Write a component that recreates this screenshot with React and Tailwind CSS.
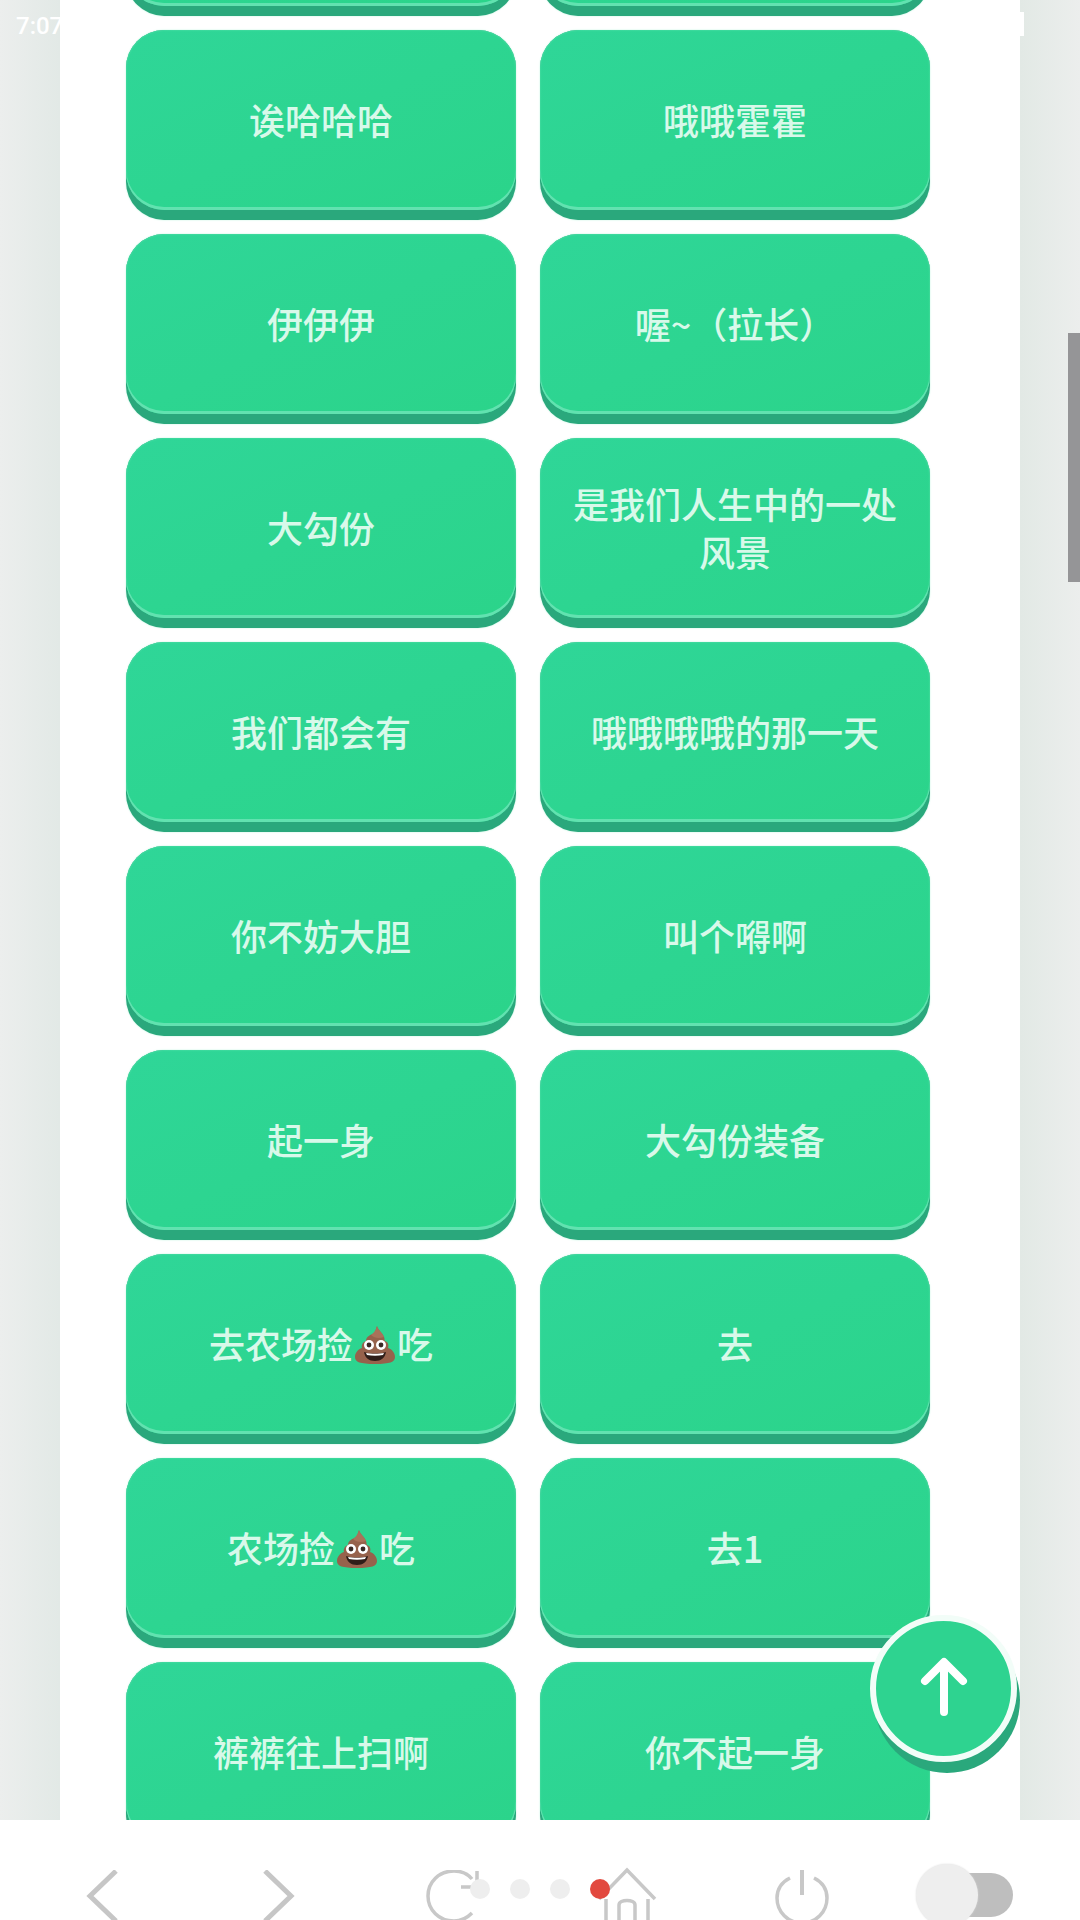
const rows = [
  ["", ""],
  ["诶哈哈哈", "哦哦霍霍"],
  ["伊伊伊", "喔~（拉长）"],
  ["大勾份", "是我们人生中的一处风景"],
  ["我们都会有", "哦哦哦哦的那一天"],
  ["你不妨大胆", "叫个嘚啊"],
  ["起一身", "大勾份装备"],
  [["去农场捡", "吃"], "去"],
  [["农场捡", "吃"], "去1"],
  ["裤裤往上扫啊", "你不起一身"],
];

function Poop() {
  return (
    <svg viewBox="0 0 44 40" className="w-[44px] h-[40px] mb-[-4px] shrink-0">
      <path d="M24 1c1 4 5 6 7 11 1 2 0 3 1 4 3 1 4 4 3 7 4 1 7 5 7 9 0 5-5 7-20 7S2 37 2 32c0-4 3-8 7-9-1-3 1-6 4-7 0-5 5-6 8-8 2-2 2-5 3-7z" fill="#96624c" />
      <path d="M24 1c1 4 5 6 7 11-5 2-10 1-13-2 3-2 5-5 6-9z" fill="#a9725a" />
      <circle cx="16" cy="20" r="5" fill="#fff" />
      <circle cx="28" cy="20" r="5" fill="#fff" />
      <circle cx="16" cy="20" r="2.4" fill="#3a2a25" />
      <circle cx="28" cy="20" r="2.4" fill="#3a2a25" />
      <path d="M11 27c6 2 16 2 22 0-1 6-5 9-11 9s-10-3-11-9z" fill="#2e1d18" />
      <path d="M13 28c5 1 13 1 18 0l-1 2c-5 1-11 1-16 0z" fill="#fff" />
    </svg>
  );
}

function Label({ text }) {
  if (Array.isArray(text)) {
    return (
      <span className="flex items-center justify-center">
        <span>{text[0]}</span>
        <Poop />
        <span>{text[1]}</span>
      </span>
    );
  }
  return <span>{text}</span>;
}

function Btn({ text }) {
  return (
    <div className="h-[190px] w-[390px] rounded-[38px] bg-[#2aa87c] shadow-[0_0_2px_#b9f3dc]">
      <div className="h-[180px] pb-[2px] rounded-[38px] bg-gradient-to-br from-[#2fd698] to-[#2bd48a] shadow-[inset_0_-3px_0_#62e2b0,inset_0_0_2px_#62e2b0] flex items-center justify-center px-4 text-center text-[36px] leading-[48px] font-medium text-[#d8f9ea] font-['Noto_Sans_CJK_SC','Noto_Sans',sans-serif]">
        <Label text={text} />
      </div>
    </div>
  );
}

export default function App() {
  return (
    <div className="relative w-[1080px] h-[1920px] overflow-hidden bg-white font-['Noto_Sans_CJK_SC',sans-serif]">
      <div className="flex h-[1820px] overflow-hidden">
        <div className="w-[60px] bg-gradient-to-r from-[#eceeed] to-[#e2e9e6]" />
        <div className="w-[960px] bg-white pl-[66px] pt-0">
          <div className="mt-[-174px] grid grid-cols-[390px_390px] gap-x-[24px] gap-y-[14px]">
            {rows.map((r, i) => (
              <div key={i} className="contents">
                <Btn text={r[0]} />
                <Btn text={r[1]} />
              </div>
            ))}
          </div>
        </div>
        <div className="flex-1 bg-gradient-to-r from-[#e2e9e5] to-[#eceeed] flex justify-end pt-[333px]">
          <div className="w-[12px] h-[249px] bg-[#959597]" />
        </div>
      </div>

      <div className="h-[100px] bg-white grid grid-cols-[176px_176px_176px_176px_176px_176px] pl-[14px] pt-[50px]">
        <div className="flex justify-center pl-[2px]">
          <svg width="34" height="54" viewBox="0 0 34 54" fill="none" stroke="#c6c6c6" strokeWidth="5"><path d="M30 1 4 26l26 25" /></svg>
        </div>
        <div className="flex justify-center pr-[1px]">
          <svg width="34" height="54" viewBox="0 0 34 54" fill="none" stroke="#c6c6c6" strokeWidth="5"><path d="M4 1l26 25L4 51" /></svg>
        </div>
        <div className="flex justify-center">
          <svg width="56" height="54" viewBox="0 0 56 54" fill="none" stroke="#c8c8c8" strokeWidth="3.5"><path d="M46 9C41 3 34 1 28 1 13 1 2 12 2 26s11 25 26 25c7 0 13-3 18-8" /><path d="M51 1v16H35" /></svg>
        </div>
        <div className="flex justify-center pr-[7px]">
          <svg width="60" height="56" viewBox="0 0 60 56" fill="none" stroke="#c8c8c8" strokeWidth="3.5" className="mt-[-3px]"><path d="M2 32 30 3l28 29" /><path d="M9 32v24M51 32v24" /><path d="M22 56V38c0-6 16-6 16 0v18" /></svg>
        </div>
        <div className="flex justify-center pr-[8px]">
          <svg width="54" height="54" viewBox="0 0 54 54" fill="none" stroke="#c8c8c8" strokeWidth="3.5"><path d="M15 8C7 12 2 19 2 28c0 14 11 25 25 25s25-11 25-25c0-9-5-16-13-20" /><path d="M27 0v25" strokeWidth="4" /></svg>
        </div>
        <div className="flex justify-start pl-[26px]">
          <div className="relative h-[44px] w-[93px] mt-[3px] rounded-full bg-[#bebebe]">
            <div className="absolute left-[-4px] top-[-9px] w-[62px] h-[62px] rounded-full bg-[#eeeeee] shadow-[0_0_2px_#dcdcdc]" />
          </div>
        </div>
      </div>

      <div className="absolute left-[16px] top-[12px] text-[24px] leading-[28px] text-white font-['Roboto',sans-serif] font-medium">7:07</div>
      <div className="absolute left-[1020px] top-[12px] w-[4px] h-[24px] bg-white" />

      <div className="absolute left-[470px] top-[1879px] w-[20px] h-[20px] rounded-full bg-[#eeeeee]" />
      <div className="absolute left-[510px] top-[1879px] w-[20px] h-[20px] rounded-full bg-[#eeeeee]" />
      <div className="absolute left-[550px] top-[1879px] w-[20px] h-[20px] rounded-full bg-[#eeeeee]" />
      <div className="absolute left-[590px] top-[1879px] w-[20px] h-[20px] rounded-full bg-[#e2493f]" />

      <div className="absolute left-[874px] top-[1627px] w-[146px] h-[146px] rounded-full bg-[#2aa87c]" />
      <div className="absolute left-[870px] top-[1615px] w-[147px] h-[147px] rounded-full bg-[#2ed390] border-[6px] border-[#f2fdf8] flex items-center justify-center pb-[6px]">
        <svg width="60" height="62" viewBox="0 0 60 62" fill="none" stroke="#ffffff" strokeWidth="8" strokeLinecap="round" strokeLinejoin="round"><path d="M30 57V8M11 26 30 7l19 19" /></svg>
      </div>
    </div>
  );
}
